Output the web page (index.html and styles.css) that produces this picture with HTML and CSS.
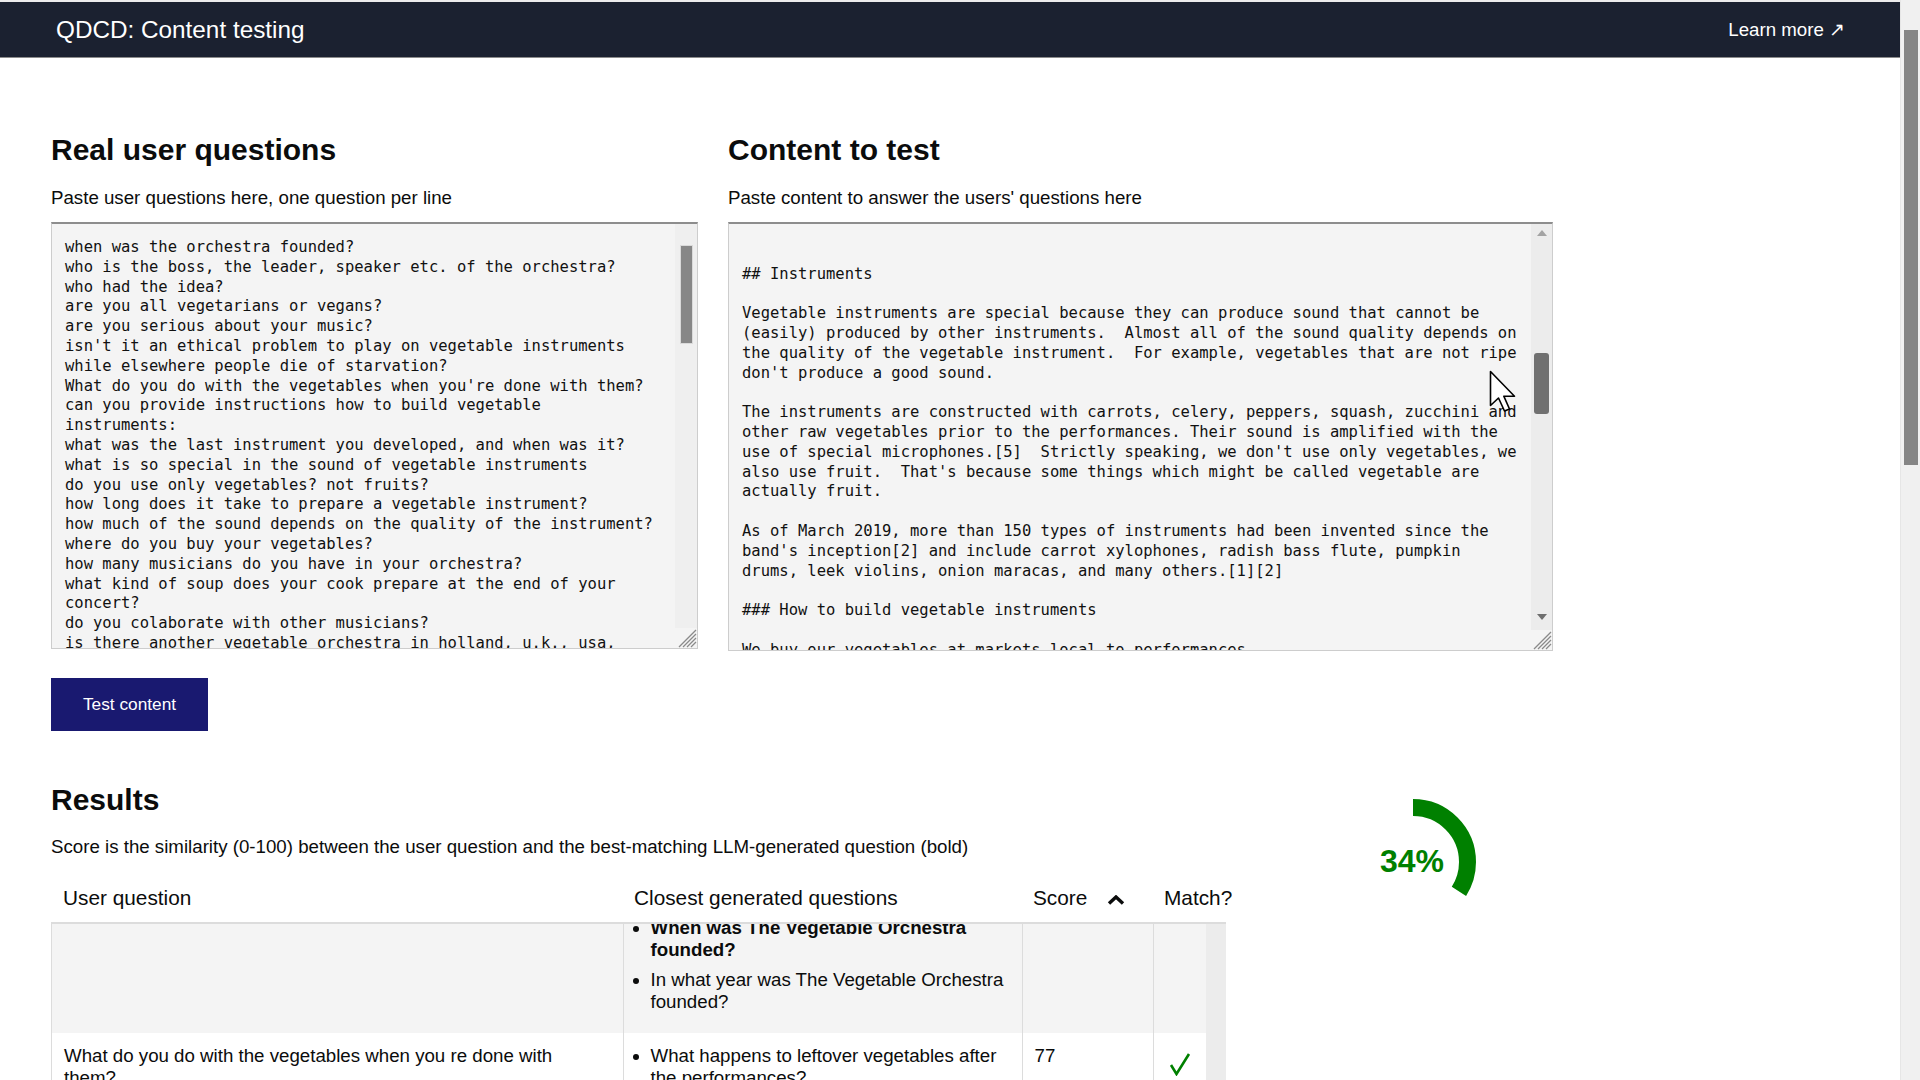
FILE: index.html
```html
<!DOCTYPE html>
<html lang="en">
<head>
<meta charset="utf-8">
<title>QDCD: Content testing</title>
<link rel="stylesheet" href="styles.css">
</head>
<body>
<header class="topbar">
  <span class="app-title">QDCD: Content testing</span>
  <a class="learn-more" href="#">Learn more ↗</a>
</header>

<main class="page">
  <section class="inputs">
    <div class="field field-questions">
      <h2 class="section-title">Real user questions</h2>
      <p class="hint">Paste user questions here, one question per line</p>
      <div class="editor editor-questions">
        <textarea class="text-input questions-input" spellcheck="false">
when was the orchestra founded?
who is the boss, the leader, speaker etc. of the orchestra?
who had the idea?
are you all vegetarians or vegans?
are you serious about your music?
isn't it an ethical problem to play on vegetable instruments while elsewhere people die of starvation?
What do you do with the vegetables when you're done with them?
can you provide instructions how to build vegetable instruments:
what was the last instrument you developed, and when was it?
what is so special in the sound of vegetable instruments
do you use only vegetables? not fruits?
how long does it take to prepare a vegetable instrument?
how much of the sound depends on the quality of the instrument?
where do you buy your vegetables?
how many musicians do you have in your orchestra?
what kind of soup does your cook prepare at the end of your concert?
do you colaborate with other musicians?
is there another vegetable orchestra in holland, u.k., usa, etc.?
do you also play at private parties?
how much does a concert cost?
do you have cd's or records?
where can i buy your records?
how do you tune the instruments?
what happens if an instrument breaks during a concert?
do the instruments smell?
is the audience allowed to eat the soup?
how often do you rehearse?
do you have a day job?
who composes your music?
what kind of music do you play?
do you play covers too?
how did you meet?
how old are the members of the orchestra?
can i join the orchestra?
do you give workshops?
do you teach children how to make vegetable instruments?
which vegetable is the hardest to play?
what is your favourite vegetable?
what is the most expensive instrument?
do you grow your own vegetables?
are the vegetables organic?
how many concerts do you play per year?
where was your biggest concert?
which countries have you toured?
when is your next concert?
do you play in america?
do you play in asia?
how do you travel with your instruments?
can you take vegetables on a plane?
do you need special microphones?
who does your sound engineering?
how loud can a vegetable instrument be?
do you use electronics?
do you sample the sounds?
have you won any awards?
what is the name of your latest album?
how many albums have you released?
is your music available on spotify?
do you have a website?
how can i contact you?
do you have a newsletter?
can i book you for a festival?
how long is a concert?
is there a break during the concert?
is the concert suitable for children?
do you sell merchandise?
what do you wear on stage?
have you ever played with a symphony orchestra?
do you improvise?
is there a conductor?
how do you decide who plays which instrument?
do the vegetables rot during the tour?
where do you store the vegetables?
what is a leek violin?
how is a carrot flute made?</textarea>
        <div class="vscroll vscroll-questions" aria-hidden="true">
          <div class="thumb thumb-questions"></div>
          <div class="grip">
            <svg width="20" height="20" viewBox="0 0 20 20"><path d="M2 19 L19 2 M6 19 L19 6 M10 19 L19 10 M14 19 L19 14" stroke="#8a8a8a" stroke-width="1.3" fill="none"/></svg>
          </div>
        </div>
      </div>
    </div>

    <div class="field field-content">
      <h2 class="section-title">Content to test</h2>
      <p class="hint">Paste content to answer the users' questions here</p>
      <div class="editor editor-content">
        <textarea class="text-input content-input" id="content-input" spellcheck="false">
# The Vegetable Orchestra

The Vegetable Orchestra (German: Das erste Wiener Gemüseorchester) is an
Austrian musical group founded in Vienna in 1998.  All of the group's
instruments are made from fresh vegetables.[1][2]

## History

The orchestra was founded in February 1998 by a group of musicians, artists,
designers and writers who were interested in exploring new sounds.  The idea
came up during a brainstorming session about unusual instruments, and the
first concert was held in Vienna in the same year.

Since then, the orchestra has played more than 300 concerts in Europe, Asia
and North and South America.  They have released four albums: Gemüse (1999),
Automate (2003), Onionoise (2010) and Green Lines (2018).[3]

## Members

The orchestra has eleven members: musicians, visual artists, architects,
writers and sound artists.  There is no single leader; all decisions about
music, touring and new instruments are made together by the group.[4]

Most of the members are not vegetarians, but they all share a love of
vegetables and good food.  After each concert, the remains of the
instruments are used to make a vegetable soup, which is served to the
audience.

## Music

The orchestra's music ranges from experimental electronic music and noise to
beat-oriented house, free jazz and dub.  Most pieces are composed by the
members themselves, but they also play arrangements of works by other
composers, such as Igor Stravinsky and Kraftwerk.


## Instruments

Vegetable instruments are special because they can produce sound that cannot be (easily) produced by other instruments.  Almost all of the sound quality depends on the quality of the vegetable instrument.  For example, vegetables that are not ripe don't produce a good sound.

The instruments are constructed with carrots, celery, peppers, squash, zucchini and other raw vegetables prior to the performances. Their sound is amplified with the use of special microphones.[5]  Strictly speaking, we don't use only vegetables, we also use fruit.  That's because some things which might be called vegetable are actually fruit.

As of March 2019, more than 150 types of instruments had been invented since the band's inception[2] and include carrot xylophones, radish bass flute, pumpkin drums, leek violins, onion maracas, and many others.[1][2]

### How to build vegetable instruments

We buy our vegetables at markets local to performances.
Building the instruments takes about three to four hours, and every instrument is made fresh for every concert, because vegetables go soft very quickly.

To make a carrot flute, take a large, straight carrot and hollow it out with a drill.  Cut a mouthpiece at one end and drill finger holes along the side.  The longer the carrot, the deeper the sound.

To make a pumpkin drum, cut the top off a pumpkin and scoop out the seeds.  Play it with your hands or with soft mallets.  Larger pumpkins give a deeper, fuller sound.

To make a leek violin, rub two leeks together.  The squeaking sound can be changed by pressing harder or by wetting the leaves.

To make onion maracas, dry the outer skins of several onions and put them in a small container.  Shake it to make a rustling sound.

## Concerts

The orchestra has performed more than 300 concerts in over 30 countries, including Austria, Germany, the UK, France, China, Japan, the USA, Mexico and Brazil.  A typical concert lasts about 75 minutes, without a break.

After each concert, the cook prepares a vegetable soup from the remains of the instruments, which is served to the audience.

## Recordings

- Gemüse (1999)
- Automate (2003)
- Onionoise (2010)
- Green Lines (2018)

## References

[1] "The Vegetable Orchestra". Official website.
[2] "Playing with your food: the Vegetable Orchestra". BBC News.
[3] "Green Lines review". The Guardian.
[4] "Das erste Wiener Gemüseorchester". Der Standard.
[5] "How to amplify a carrot". Sound on Sound.</textarea>
        <div class="vscroll vscroll-content" aria-hidden="true">
          <svg class="arrow arrow-up" width="10" height="6" viewBox="0 0 10 6"><path d="M0 6 L5 0 L10 6 Z" fill="#a3a3a3"/></svg>
          <div class="thumb thumb-content"></div>
          <svg class="arrow arrow-down" width="10" height="6" viewBox="0 0 10 6"><path d="M0 0 L10 0 L5 6 Z" fill="#6e6e6e"/></svg>
          <div class="grip">
            <svg width="20" height="20" viewBox="0 0 20 20"><path d="M2 19 L19 2 M6 19 L19 6 M10 19 L19 10 M14 19 L19 14" stroke="#8a8a8a" stroke-width="1.3" fill="none"/></svg>
          </div>
        </div>
      </div>
    </div>
  </section>

  <button class="primary-btn" type="button">Test content</button>

  <section class="results">
    <div class="results-main">
      <h2 class="section-title results-title">Results</h2>
      <p class="results-note">Score is the similarity (0-100) between the user question and the best-matching LLM-generated question (bold)</p>

      <table class="results-head">
        <colgroup><col class="c-user"><col class="c-gen"><col class="c-score"><col class="c-match"></colgroup>
        <thead>
          <tr>
            <th>User question</th>
            <th>Closest generated questions</th>
            <th>Score<svg class="sort-icon" width="18" height="10" viewBox="0 0 18 10"><polyline points="2,8.5 9,2 16,8.5" fill="none" stroke="#0b0c0c" stroke-width="3.4"/></svg></th>
            <th>Match?</th>
          </tr>
        </thead>
      </table>

      <div class="results-body">
        <div class="results-scroll" id="results-scroll">
          <table class="results-table">
            <colgroup><col class="c-user"><col class="c-gen"><col class="c-score"><col class="c-match"></colgroup>
            <tbody>
              <tr>
                <td class="q">is there another vegetable orchestra in holland, u.k., usa, etc.?</td>
                <td><ul><li>Has The Vegetable Orchestra performed in the UK?</li><li>Which countries has The Vegetable Orchestra toured?</li><li><strong>Are there other orchestras that play vegetable instruments?</strong></li></ul></td>
                <td>38</td><td></td>
              </tr>
              <tr>
                <td class="q">what kind of soup does your cook prepare at the end of your concert?</td>
                <td><ul><li><strong>What happens to the vegetables after a concert?</strong></li><li>Is soup served to the audience?</li><li>Who cooks the soup?</li></ul></td>
                <td>44</td><td></td>
              </tr>
              <tr>
                <td class="q">are you serious about your music?</td>
                <td><ul><li><strong>What kind of music does The Vegetable Orchestra play?</strong></li><li>Is The Vegetable Orchestra a comedy act?</li><li>How experimental is the orchestra's music?</li></ul></td>
                <td>51</td><td></td>
              </tr>
              <tr>
                <td class="q">isn't it an ethical problem to play on vegetable instruments while elsewhere people die of starvation?</td>
                <td><ul><li><strong>Is it wasteful to make instruments from vegetables?</strong></li><li>What happens to the vegetables after a concert?</li><li>Are the vegetables eaten afterwards?</li></ul></td>
                <td>58</td><td></td>
              </tr>
              <tr>
                <td class="q">who is the boss, the leader, speaker etc. of the orchestra?</td>
                <td><ul><li><strong>Who leads The Vegetable Orchestra?</strong></li><li>How are decisions made in the orchestra?</li><li>How many members does the orchestra have?</li></ul></td>
                <td>66</td><td></td>
              </tr>
              <tr>
                <td class="q">do you colaborate with other musicians?</td>
                <td><ul><li><strong>Has The Vegetable Orchestra worked with other artists?</strong></li><li>Which composers' works does the orchestra play?</li><li>Who composes the orchestra's music?</li></ul></td>
                <td>71</td><td></td>
              </tr>
              <tr>
                <td class="q">when was the orchestra founded?</td>
                <td><ul><li>Where was The Vegetable Orchestra founded?</li><li id="anchor-item"><strong>When was The Vegetable Orchestra founded?</strong></li><li>In what year was The Vegetable Orchestra founded?</li></ul></td>
                <td>76</td>
                <td><svg class="check" width="22" height="24" viewBox="0 0 22 24"><polyline points="2,13 7.5,22 20,2" fill="none" stroke="#008000" stroke-width="2.6"/></svg></td>
              </tr>
              <tr>
                <td class="q">What do you do with the vegetables when you re done with them?</td>
                <td><ul><li>What happens to leftover vegetables after the performances?</li><li><strong>What is done with the instruments after a concert?</strong></li><li>Is soup made from the vegetables?</li></ul></td>
                <td>77</td>
                <td><svg class="check" width="22" height="24" viewBox="0 0 22 24"><polyline points="2,13 7.5,22 20,2" fill="none" stroke="#008000" stroke-width="2.6"/></svg></td>
              </tr>
              <tr>
                <td class="q">how long does it take to prepare a vegetable instrument?</td>
                <td><ul><li><strong>How long does it take to build a vegetable instrument?</strong></li><li>How are vegetable instruments made?</li><li>When are the instruments constructed?</li></ul></td>
                <td>81</td>
                <td><svg class="check" width="22" height="24" viewBox="0 0 22 24"><polyline points="2,13 7.5,22 20,2" fill="none" stroke="#008000" stroke-width="2.6"/></svg></td>
              </tr>
              <tr>
                <td class="q">where do you buy your vegetables?</td>
                <td><ul><li><strong>Where does the orchestra buy its vegetables?</strong></li><li>Are the vegetables bought locally?</li><li>What vegetables are used?</li></ul></td>
                <td>84</td>
                <td><svg class="check" width="22" height="24" viewBox="0 0 22 24"><polyline points="2,13 7.5,22 20,2" fill="none" stroke="#008000" stroke-width="2.6"/></svg></td>
              </tr>
              <tr>
                <td class="q">do you use only vegetables? not fruits?</td>
                <td><ul><li><strong>Does the orchestra use only vegetables?</strong></li><li>Are fruits used as instruments?</li><li>Which vegetables are used for instruments?</li></ul></td>
                <td>86</td>
                <td><svg class="check" width="22" height="24" viewBox="0 0 22 24"><polyline points="2,13 7.5,22 20,2" fill="none" stroke="#008000" stroke-width="2.6"/></svg></td>
              </tr>
              <tr>
                <td class="q">how many musicians do you have in your orchestra?</td>
                <td><ul><li><strong>How many members does The Vegetable Orchestra have?</strong></li><li>Who are the members of the orchestra?</li><li>What are the members' backgrounds?</li></ul></td>
                <td>88</td>
                <td><svg class="check" width="22" height="24" viewBox="0 0 22 24"><polyline points="2,13 7.5,22 20,2" fill="none" stroke="#008000" stroke-width="2.6"/></svg></td>
              </tr>
              <tr>
                <td class="q">who had the idea?</td>
                <td><ul><li><strong>Who had the idea for The Vegetable Orchestra?</strong></li><li>Who founded the orchestra?</li><li>How did the orchestra start?</li></ul></td>
                <td>89</td>
                <td><svg class="check" width="22" height="24" viewBox="0 0 22 24"><polyline points="2,13 7.5,22 20,2" fill="none" stroke="#008000" stroke-width="2.6"/></svg></td>
              </tr>
              <tr>
                <td class="q">what is so special in the sound of vegetable instruments</td>
                <td><ul><li><strong>What is special about the sound of vegetable instruments?</strong></li><li>Why use vegetables as instruments?</li><li>How is the sound amplified?</li></ul></td>
                <td>91</td>
                <td><svg class="check" width="22" height="24" viewBox="0 0 22 24"><polyline points="2,13 7.5,22 20,2" fill="none" stroke="#008000" stroke-width="2.6"/></svg></td>
              </tr>
              <tr>
                <td class="q">how much of the sound depends on the quality of the instrument?</td>
                <td><ul><li><strong>How much does the sound depend on the quality of the vegetables?</strong></li><li>Do unripe vegetables sound good?</li><li>What affects the sound quality?</li></ul></td>
                <td>92</td>
                <td><svg class="check" width="22" height="24" viewBox="0 0 22 24"><polyline points="2,13 7.5,22 20,2" fill="none" stroke="#008000" stroke-width="2.6"/></svg></td>
              </tr>
              <tr>
                <td class="q">what was the last instrument you developed, and when was it?</td>
                <td><ul><li><strong>What instruments has the orchestra invented?</strong></li><li>How many instruments have been invented?</li><li>When was the latest instrument developed?</li></ul></td>
                <td>93</td>
                <td><svg class="check" width="22" height="24" viewBox="0 0 22 24"><polyline points="2,13 7.5,22 20,2" fill="none" stroke="#008000" stroke-width="2.6"/></svg></td>
              </tr>
              <tr>
                <td class="q">are you all vegetarians or vegans?</td>
                <td><ul><li><strong>Are the members of The Vegetable Orchestra vegetarians?</strong></li><li>Do the musicians eat meat?</li><li>Are the members vegan?</li></ul></td>
                <td>95</td>
                <td><svg class="check" width="22" height="24" viewBox="0 0 22 24"><polyline points="2,13 7.5,22 20,2" fill="none" stroke="#008000" stroke-width="2.6"/></svg></td>
              </tr>
            </tbody>
          </table>
        </div>
        <div class="vscroll vscroll-table" aria-hidden="true"></div>
      </div>
    </div>

    <svg class="gauge" width="140" height="140" viewBox="0 0 140 140" role="img" aria-label="34% match">
      <circle cx="70" cy="70" r="54.5" fill="none" stroke="#008000" stroke-width="17" stroke-dasharray="116.4 400" transform="rotate(-90 70 70)"/>
      <text class="gauge-value" x="69" y="69" text-anchor="middle" dominant-baseline="central">34%</text>
    </svg>
  </section>
</main>

<div class="page-scrollbar" aria-hidden="true"><div class="page-thumb"></div></div>

<svg class="pointer" width="28" height="44" viewBox="0 0 28 44" aria-hidden="true">
  <path d="M1.5 1.5 V35.5 L9.5 28 L15.5 41 L20.5 39 L14.8 26.2 H25.5 Z" fill="#fff" stroke="#000" stroke-width="1.6" stroke-linejoin="round"/>
</svg>

<script src="script.js"></script>
</body>
</html>
```

FILE: styles.css
```css
*, *::before, *::after { box-sizing: border-box; }

html { background: #fff; }

body {
  margin: 0;
  font-family: "Liberation Sans", Arial, sans-serif;
  color: #0b0c0c;
}

/* Top bar */
.topbar {
  display: flex;
  align-items: center;
  justify-content: space-between;
  height: 58px;
  margin-right: 20px;
  padding: 0 55px 0 56px;
  background: #1b2130;
  border-top: 2px solid #ececec;
  border-bottom: 1px solid #8c8c8c;
  color: #fff;
}
.app-title { font-size: 24.3px; }
.learn-more {
  font-size: 18.7px;
  color: #fff;
  text-decoration: none;
}

/* Page */
.page { padding: 74px 0 120px 51px; }

.inputs {
  display: flex;
  align-items: flex-start;
  gap: 30px;
}
.field-questions { width: 647px; }
.field-content { width: 825px; }

.section-title {
  margin: 0 0 19px;
  font-size: 30px;
  line-height: 36px;
  font-weight: 700;
}
.hint {
  margin: 0 0 13px;
  font-size: 18.7px;
  line-height: 22px;
}

/* Text editors */
.editor {
  display: flex;
  border: 1px solid #cdcdcd;
  border-top: 2px solid #8d8d8d;
  background: #f4f4f4;
}
.editor-questions { height: 427px; }
.editor-content { height: 429px; }

.text-input {
  flex: 1;
  min-width: 0;
  height: 100%;
  margin: 0;
  padding: 14px 20px 12px 13px;
  border: 0;
  background: transparent;
  color: #111;
  font-family: "DejaVu Sans Mono", "Liberation Mono", monospace;
  font-size: 15.5px;
  line-height: 19.8px;
  white-space: pre-wrap;
  overflow: hidden;
  resize: none;
  outline: none;
}
.content-input { padding-right: 9px; }

.vscroll {
  flex: none;
  display: flex;
  flex-direction: column;
  align-items: center;
  background: #efefef;
}
.vscroll-questions { width: 22px; }
.vscroll-content { width: 21px; background: #ececec; }

.thumb { flex: none; }
.thumb-questions {
  width: 13px;
  height: 99px;
  margin-top: 21px;
  background: #878787;
  border: 1px solid #dadada;
}
.thumb-content {
  width: 15px;
  height: 61px;
  margin-top: 117px;
  background: #707070;
  border-radius: 3px;
}
.arrow { flex: none; display: block; }
.arrow-up { margin-top: 6px; }
.arrow-down { margin-top: auto; margin-bottom: 10px; }

.grip {
  flex: none;
  align-self: stretch;
  height: 20px;
  margin-top: auto;
  background: #f4f4f4;
  display: flex;
  justify-content: flex-end;
}
.arrow-down + .grip { margin-top: 0; }
.grip svg { display: block; }

/* Button */
.primary-btn {
  display: block;
  margin-top: 27px;
  width: 157px;
  height: 53px;
  padding: 0;
  border: 0;
  background: #191970;
  color: #fff;
  font-family: inherit;
  font-size: 17.3px;
}

/* Results */
.results {
  display: flex;
  align-items: flex-start;
  margin-top: 51px;
}
.results-main { width: 1175px; }
.results-title { margin-bottom: 18px; }
.results-note {
  margin: 0 0 16px;
  font-size: 18.7px;
  line-height: 22px;
}

.results-head,
.results-table {
  width: 1154px;
  table-layout: fixed;
  border-collapse: collapse;
}
.c-user { width: 571px; }
.c-gen { width: 399px; }
.c-score { width: 131px; }
.c-match { width: 53px; }

.results-head th {
  padding: 12px;
  text-align: left;
  font-weight: 400;
  font-size: 20.8px;
  line-height: 24px;
  white-space: nowrap;
}
.sort-icon {
  margin-left: 20px;
  vertical-align: baseline;
}

.results-body {
  display: flex;
  width: 1175px;
  height: 1400px;
  border-left: 1px solid #dcdcdc;
  border-top: 2px solid #dcdcdc;
}
.results-scroll {
  width: 1154px;
  flex: none;
  overflow: hidden;
}
.vscroll-table { width: 20px; background: #ececec; }

.results-table td {
  padding: 12px;
  vertical-align: top;
  border-right: 1px solid #dcdcdc;
  font-size: 18.7px;
  line-height: 22px;
}
.results-table td.q { padding-right: 26px; }
.results-table tr:nth-child(odd) { background: #f4f4f4; }
.results-table tr:nth-child(even) { background: #fff; }
.results-table ul {
  margin: 0;
  padding-left: 15px;
}
.results-table li { margin-bottom: 8px; }
.results-table strong { font-weight: 700; }

.check {
  display: block;
  margin: 7px 0 0 3px;
}

.gauge {
  flex: none;
  margin: 10px 0 0 117px;
}
.gauge-value {
  font-family: "Liberation Sans", Arial, sans-serif;
  font-weight: 700;
  font-size: 32px;
  fill: #008000;
}

/* Browser chrome drawn over the page edge */
.page-scrollbar {
  position: fixed;
  top: 0;
  right: 0;
  width: 20px;
  height: 100vh;
  background: #f0f0f0;
  border-left: 1px solid #e6e6e6;
}
.page-thumb {
  width: 14px;
  height: 435px;
  margin: 30px 0 0 3px;
  background: #858585;
}

/* Mouse pointer drawn over the content editor */
.pointer {
  position: absolute;
  left: 1489px;
  top: 370px;
  pointer-events: none;
}
```

FILE: script.js
```js
(function () {
  function place() {
    var ta = document.getElementById('content-input');
    if (ta) {
      var lh = parseFloat(getComputedStyle(ta).lineHeight) || 19.8;
      var idx = ta.value.indexOf('## Instruments');
      var k = ta.value.slice(0, idx).split('\n').length - 1;
      ta.scrollTop = Math.round(k * lh - 27);
    }
    var sc = document.getElementById('results-scroll');
    var item = document.getElementById('anchor-item');
    if (sc && item) {
      sc.scrollTop += item.getBoundingClientRect().top - 917;
    }
  }
  place();
  window.addEventListener('load', place);
})();
```
